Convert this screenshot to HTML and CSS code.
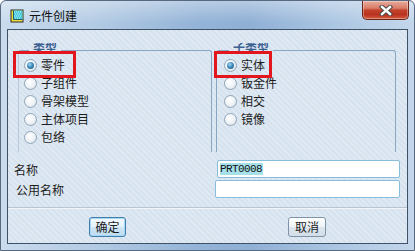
FILE: index.html
```html
<!DOCTYPE html>
<html lang="zh-CN">
<head>
    <meta charset="UTF-8">
    <title>元件创建</title>
    <link rel="stylesheet" href="styles.css">
</head>
<body>
    <div class="window">
        <div class="titlebar">
            <svg class="app-icon" width="14" height="14" viewBox="0 0 14 14">
                <rect x="0.5" y="0.5" width="13" height="13" fill="#2b2b2b"/>
                <rect x="1.5" y="1.5" width="11" height="11" fill="#f2dc3a"/>
                <rect x="3.5" y="1.5" width="9" height="9" fill="#48c9dc"/>
                <path d="M4 3h1M6 3h1M8 3h1M10 3h1M5 5h1M7 5h1M9 5h1M4 7h1M6 7h1M8 7h1M10 7h1M5 9h1M7 9h1M9 9h1" stroke="#bff3fa" stroke-width="1"/>
                <path d="M3.5 1.5v9h9" fill="none" stroke="#1d5f6a" stroke-width="1"/>
            </svg>
            <span class="title">元件创建</span>
            <div class="close">
                <svg width="14" height="11" viewBox="0 0 14 11">
                    <path d="M3 2l8 7M11 2l-8 7" stroke="#4a4a4a" stroke-width="4.4" stroke-linecap="square"/>
                    <path d="M3 2l8 7M11 2l-8 7" stroke="#ffffff" stroke-width="2.4" stroke-linecap="square"/>
                </svg>
            </div>
        </div>

        <div class="client">
            <div class="groups">
                <fieldset class="group group-type">
                    <legend>类型</legend>
                    <div class="options">
                        <div class="option"><span class="radio on"></span>零件</div>
                        <div class="option"><span class="radio"></span>子组件</div>
                        <div class="option"><span class="radio"></span>骨架模型</div>
                        <div class="option"><span class="radio"></span>主体项目</div>
                        <div class="option"><span class="radio"></span>包络</div>
                    </div>
                </fieldset>
                <fieldset class="group group-sub">
                    <legend>子类型</legend>
                    <div class="options">
                        <div class="option"><span class="radio on"></span>实体</div>
                        <div class="option"><span class="radio"></span>钣金件</div>
                        <div class="option"><span class="radio"></span>相交</div>
                        <div class="option"><span class="radio"></span>镜像</div>
                    </div>
                </fieldset>
            </div>

            <div class="fields">
                <div class="field">
                    <span class="label">名称</span>
                    <div class="input input-name"><span class="sel">PRT0008</span></div>
                </div>
                <div class="field">
                    <span class="label label-common">公用名称</span>
                    <div class="input input-common"></div>
                </div>
            </div>

            <div class="separator"></div>

            <div class="actions">
                <div class="btn btn-default">确定</div>
                <div class="btn">取消</div>
            </div>
        </div>

        <!-- 红框标注 -->
        <div class="mark mark-left"></div>
        <div class="mark mark-right"></div>
    </div>
</body>
</html>
```

FILE: styles.css
```css
* {
    padding: 0;
    margin: 0;
    box-sizing: border-box;
}

body {
    font-family: "Noto Sans CJK SC", "Noto Sans", sans-serif;
    font-size: 12px;
    color: #1c1c1c;
    background: #ffffff;
}

.window {
    position: relative;
    width: 415px;
    height: 251px;
    border: 1px solid #56697f;
    border-radius: 6px 6px 0 0;
    background:
        linear-gradient(180deg, rgba(255,255,255,0.35) 0, rgba(255,255,255,0) 22px),
        linear-gradient(90deg, #c9dbed 0%, #b3cbe4 22%, #93b3d7 48%, #8fafd5 60%, #aac5e2 80%, #c3d7eb 100%);
    display: flex;
    flex-direction: column;
}

/* 标题栏 */
.titlebar {
    height: 28px;
    display: flex;
    align-items: center;
    padding-left: 9px;
}

.app-icon {
    margin-top: 2px;
}

.title {
    margin-left: 5px;
    margin-top: 1px;
    font-size: 12px;
    color: #111;
}

.close {
    margin-left: auto;
    margin-right: 5px;
    align-self: flex-start;
    width: 47px;
    height: 19px;
    border: 1px solid #6b2418;
    border-top: none;
    border-radius: 0 0 5px 5px;
    background: linear-gradient(180deg, #e7aa9c 0%, #da7d69 40%, #c4432c 50%, #b8331f 75%, #d45c3e 100%);
    box-shadow: inset 0 0 0 1px rgba(255,255,255,0.35);
    display: flex;
    align-items: center;
    justify-content: center;
}

/* 客户区 */
.client {
    height: 215px;
    margin: 0 6px;
    border: 1px solid #3f5267;
    background-color: #dce7f1;
    background-image: repeating-linear-gradient(45deg, #dfe9f3 0, #dfe9f3 2px, #d6e2ed 2px, #d6e2ed 4px);
    display: flex;
    flex-direction: column;
}

.groups {
    display: flex;
    gap: 4px;
    padding-left: 10px;
    margin-top: 11px;
    height: 111px;
}

.group {
    border: 1px solid #8aa6c4;
    border-bottom: none;
    border-radius: 3px 3px 0 0;
    padding: 0 0 6px 5px;
}

.group-type {
    width: 194px;
    border-left-color: #b7cadd;
}

.group-sub {
    width: 180px;
    padding-left: 7px;
}

.group legend {
    margin-left: 5px;
    padding: 0 4px 6px;
    line-height: 12px;
    font-size: 12px;
    font-weight: bold;
    color: #3d6191;
    clip-path: inset(2px 0 0 0);
}

.options {
    margin-top: -3px;
}

.option {
    height: 18px;
    display: flex;
    align-items: center;
    gap: 4px;
    line-height: 18px;
}

.radio {
    width: 13px;
    height: 13px;
    border-radius: 50%;
    border: 1px solid #90a6ba;
    background: radial-gradient(circle at 40% 35%, #ffffff 0, #edf2f6 55%, #ccd7e1 100%);
    display: grid;
    place-items: center;
}

.radio.on::after {
    content: '';
    width: 7px;
    height: 7px;
    border-radius: 50%;
    background: radial-gradient(circle at 40% 35%, #9fd8f2 0, #3a86b6 50%, #1d5580 100%);
}

/* 名称输入 */
.fields {
    margin-top: 8px;
    padding: 0 7px 0 6px;
    display: flex;
    flex-direction: column;
    gap: 2px;
}

.field {
    height: 18px;
    display: flex;
    align-items: center;
}

.label-common {
    margin-left: 2px;
}

.input {
    margin-left: auto;
    height: 18px;
    background: #ffffff;
    border: 1px solid #88bddc;
    border-radius: 2px;
    display: flex;
    align-items: center;
    padding-left: 2px;
}

.input-name {
    width: 183px;
}

.input-common {
    width: 185px;
}

.sel {
    background: #a6e0ea;
    font-family: "Liberation Mono", monospace;
    font-size: 11px;
    letter-spacing: -0.6px;
    line-height: 12px;
    padding-right: 1px;
    color: #111;
}

.separator {
    margin-top: 9px;
    height: 2px;
    border-top: 1px solid #b8c5d2;
    border-bottom: 1px solid #f1f5f9;
}

.actions {
    margin-top: 8px;
    display: flex;
    justify-content: space-around;
}

.btn {
    width: 38px;
    height: 20px;
    border: 1px solid #7f93a8;
    border-radius: 3px;
    background: linear-gradient(180deg, #ffffff 0%, #eef3f7 50%, #dde6ee 51%, #d3dee8 100%);
    text-align: center;
    line-height: 18px;
}

.btn-default {
    width: 37px;
    border-color: #3f7fae;
    box-shadow: inset 0 0 0 1px #a9d7f1;
    background: linear-gradient(180deg, #f4fafe 0%, #e3f1fb 50%, #cfe6f6 51%, #bfdcf0 100%);
}

/* 标注红框 */
.mark {
    position: absolute;
    border: 3px solid #e3161e;
    height: 27px;
}

.mark-left {
    left: 12px;
    top: 50px;
    width: 63px;
}

.mark-right {
    left: 213px;
    top: 50px;
    width: 58px;
}
```
